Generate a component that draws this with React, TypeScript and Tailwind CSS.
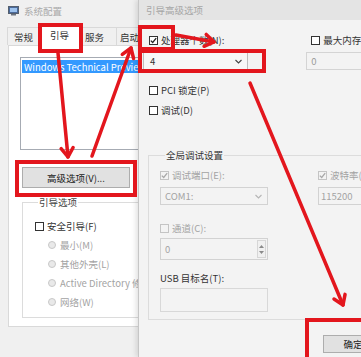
import React from "react";

const RED = "#e3161d";

const Check = ({ checked = false, disabled = false }: { checked?: boolean; disabled?: boolean }) => (
  <span
    className={`flex w-[9px] h-[9px] shrink-0 items-center justify-center border ${
      disabled ? "border-[#c4c4c4] bg-[#f3f3f3]" : "border-[#333333] bg-white"
    }`}
  >
    {checked && (
      <svg width="7" height="7" viewBox="0 0 7 7">
        <path d="M0.8 3.6 L2.7 5.5 L6.2 1.2" fill="none" stroke={disabled ? "#a8a8a8" : "#222"} strokeWidth="1.3" />
      </svg>
    )}
  </span>
);

const Radio = () => (
  <span className="w-[8px] h-[8px] shrink-0 rounded-full border border-[#c8c8c8] bg-[#e9e9e9]" />
);

const Chevron = ({ color }: { color: string }) => (
  <svg width="7" height="5" viewBox="0 0 7 5">
    <path d="M0.5 1 L3.5 4 L6.5 1" fill="none" stroke={color} strokeWidth="1.1" />
  </svg>
);

function arrowHead(x1: number, y1: number, x2: number, y2: number, size = 9, spread = 6) {
  const dx = x2 - x1;
  const dy = y2 - y1;
  const len = Math.hypot(dx, dy);
  const ux = dx / len;
  const uy = dy / len;
  const nx = -uy;
  const ny = ux;
  const a = `${x2 - ux * size + nx * spread},${y2 - uy * size + ny * spread}`;
  const b = `${x2 - ux * size - nx * spread},${y2 - uy * size - ny * spread}`;
  return `${a} ${x2},${y2} ${b}`;
}

const ARROWS = [
  [58, 53, 68, 157],
  [92, 156, 131, 48],
  [176, 35, 214, 42],
  [250, 83, 343, 305],
];

const MainWindow = () => (
  <div className="absolute left-0 top-0 w-[300px] h-[357px] bg-[#f0f0f0] flex flex-col">
    <div className="h-[22px] flex items-center pl-[8px] gap-[5px] text-[#a9a9a9]">
      <svg width="11" height="10" viewBox="0 0 11 10">
        <rect x="0.5" y="0.5" width="10" height="7" fill="#4b6a9b" stroke="#56606e" />
        <rect x="2" y="2" width="7" height="4" fill="#9ec3ee" />
        <rect x="3" y="8" width="5" height="1.5" fill="#6d7480" />
      </svg>
      <span>系统配置</span>
    </div>

    <div className="h-[23px] flex items-end pl-[7px] text-[#333333]">
      <div className="w-[34px] h-[18px] pl-[6px] flex items-center border border-b-0 border-[#d9d9d9] bg-[#f0f0f0]">常规</div>
      <div className="w-[41px] h-[23px] pl-[8px] flex items-center border border-b-0 border-[#d9d9d9] bg-white -mb-[1px] relative">
        引导
      </div>
      <div className="w-[35px] h-[18px] pl-[3px] flex items-center border border-b-0 border-l-0 border-[#d9d9d9] bg-[#f0f0f0]">服务</div>
      <div className="w-[40px] h-[18px] pl-[3px] flex items-center border border-b-0 border-l-0 border-[#d9d9d9] bg-[#f0f0f0]">启动</div>
    </div>

    <div className="ml-[8px] w-[280px] h-[282px] bg-white border border-[#d9d9d9] pt-[11px] pl-[11px] flex flex-col items-start">
      <div className="w-[200px] h-[93px] border border-[#a6abb3] pt-[2px] pl-[1px]">
        <div className="h-[13px] bg-[#3399ff] text-white pl-[2px] flex items-center whitespace-nowrap">
          Windows Technical Preview
        </div>
      </div>

      <div className="mt-[17px] ml-[2px] w-[108px] h-[21px] bg-[#e1e1e1] border border-[#adadad] flex items-center justify-center text-[#222]">
        高级选项(V)...
      </div>

      <fieldset className="mt-[8px] ml-[2px] w-[200px] border border-[#dcdcdc] pb-[9px] pl-[12px]">
        <legend className="ml-[3px] px-[1px] leading-[12px] text-[#444]">引导选项</legend>
        <div className="mt-[12px] h-[12px] flex items-center gap-[3px] text-[#333]">
          <Check />
          <span>安全引导(F)</span>
        </div>
        <div className="mt-[7px] pl-[13px] flex flex-col gap-[7px] text-[#a3a3a3]">
          {["最小(M)", "其他外壳(L)", "Active Directory 修复(R)", "网络(W)"].map((t) => (
            <div key={t} className="h-[12px] flex items-center gap-[4px] whitespace-nowrap">
              <Radio />
              <span>{t}</span>
            </div>
          ))}
        </div>
      </fieldset>
    </div>
  </div>
);

const Dialog = () => (
  <div className="absolute left-[138px] top-0 w-[240px] h-[357px] bg-[#f3f3f3] border-l border-[#c6c6c6] shadow-[-2px_0_5px_rgba(0,0,0,0.12)] flex flex-col text-[#333]">
    <div className="h-[20px] bg-[#e4e4e4] flex items-center pl-[7px] text-[#a6a6a6]">引导高级选项</div>

    <div className="mt-[14px] h-[12px] flex items-center pl-[10px] whitespace-nowrap">
      <div className="w-[169px] flex items-center gap-[3px]">
        <Check checked />
        <span>处理器个数(N):</span>
      </div>
      <div className="flex items-center gap-[3px]">
        <Check />
        <span>最大内存(M):</span>
      </div>
    </div>

    <div className="mt-[6px] flex pl-[4px]">
      <div className="w-[117px] h-[18px] border border-[#bdbdbd] bg-[#f7f7f7] flex items-center justify-between pl-[6px] pr-[5px]">
        <span>4</span>
        <Chevron color="#444" />
      </div>
      <div className="ml-[58px] w-[80px] h-[18px] border border-[#d4d4d4] bg-[#f3f3f3] flex items-center pl-[4px] text-[#9a9a9a]">
        0
      </div>
    </div>

    <div className="mt-[14px] h-[12px] flex items-center gap-[3px] pl-[10px]">
      <Check />
      <span>PCI 锁定(P)</span>
    </div>
    <div className="mt-[8px] h-[12px] flex items-center gap-[3px] pl-[10px]">
      <Check />
      <span>调试(D)</span>
    </div>

    <fieldset className="mt-[33px] ml-[9px] w-[240px] border border-[#dcdcdc] pl-[11px] pb-[7px]">
      <legend className="ml-[5px] px-[1px] leading-[12px] text-[#333]">全局调试设置</legend>

      <div className="mt-[8px] h-[12px] flex items-center text-[#a3a3a3] whitespace-nowrap">
        <div className="w-[158px] flex items-center gap-[3px]">
          <Check checked disabled />
          <span>调试端口(E):</span>
        </div>
        <div className="flex items-center gap-[3px]">
          <Check checked disabled />
          <span>波特率(B):</span>
        </div>
      </div>

      <div className="mt-[6px] flex text-[#a3a3a3]">
        <div className="w-[108px] h-[18px] border border-[#d2d2d2] bg-[#f3f3f3] flex items-center justify-between pl-[4px] pr-[5px]">
          <span>COM1:</span>
          <Chevron color="#b5b5b5" />
        </div>
        <div className="ml-[50px] w-[80px] h-[18px] border border-[#d2d2d2] bg-[#f3f3f3] flex items-center pl-[2px]">
          115200
        </div>
      </div>

      <div className="mt-[17px] h-[12px] flex items-center gap-[3px] text-[#a3a3a3]">
        <Check disabled />
        <span>通道(C):</span>
      </div>

      <div className="mt-[4px] w-[108px] h-[22px] border border-[#d2d2d2] bg-[#f3f3f3] flex items-center justify-between pl-[4px] pr-[1px] text-[#a3a3a3]">
        <span>0</span>
        <div className="w-[9px] h-[18px] border border-[#d6d6d6] bg-[#f0f0f0] flex flex-col items-center justify-center gap-[3px]">
          <svg width="5" height="3" viewBox="0 0 5 3">
            <path d="M0 3 L2.5 0 L5 3 Z" fill="#8a8a8a" />
          </svg>
          <svg width="5" height="3" viewBox="0 0 5 3">
            <path d="M0 0 L2.5 3 L5 0 Z" fill="#8a8a8a" />
          </svg>
        </div>
      </div>

      <div className="mt-[12px] h-[12px] flex items-center text-[#333]">USB 目标名(T):</div>

      <div className="mt-[4px] w-[108px] h-[24px] border border-[#d8d8d8] bg-[#f3f3f3]" />
    </fieldset>

    <div className="mt-[15px] ml-[184px] w-[60px] h-[18px] border border-[#adadad] bg-[#e1e1e1] flex items-center justify-center text-[#222]">
      确定
    </div>
  </div>
);

const Annotations = () => (
  <svg className="absolute inset-0 pointer-events-none" width="361" height="357" viewBox="0 0 361 357">
    <g fill="none" stroke={RED} strokeWidth="4">
      <rect x="40" y="25" width="41" height="26" />
      <rect x="140" y="27" width="33" height="22" />
      <rect x="140" y="51" width="124" height="20" />
      <rect x="17" y="162" width="118" height="33" />
      <rect x="307" y="320" width="60" height="50" />
    </g>
    <g fill="none" stroke={RED} strokeWidth="3.5" strokeLinecap="round" strokeLinejoin="round">
      {ARROWS.map(([x1, y1, x2, y2], i) => (
        <g key={i}>
          <line x1={x1} y1={y1} x2={x2} y2={y2} />
          <polyline points={arrowHead(x1, y1, x2, y2)} />
        </g>
      ))}
    </g>
  </svg>
);

export default function App() {
  return (
    <div className="relative w-[361px] h-[357px] overflow-hidden bg-[#f0f0f0] text-[9.5px] leading-[12px] font-['Noto_Sans_CJK_SC','Noto_Sans',sans-serif]">
      <MainWindow />
      <Dialog />
      <Annotations />
    </div>
  );
}
